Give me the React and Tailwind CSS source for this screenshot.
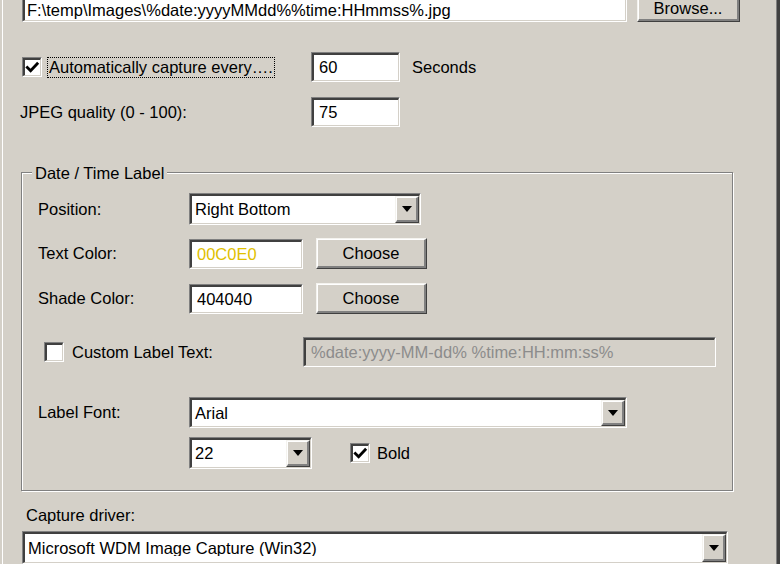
import React from "react";

function Sunken({ className = "", innerClassName = "bg-white", children }) {
  return (
    <div className={`border border-t-[#808080] border-l-[#808080] border-b-white border-r-white ${className}`}>
      <div className={`h-full w-full border-t-2 border-l-2 border-b border-r border-t-[#404040] border-l-[#404040] border-b-[#d4d0c8] border-r-[#d4d0c8] flex items-center ${innerClassName}`}>
        {children}
      </div>
    </div>
  );
}

function Raised({ className = "", children }) {
  return (
    <div className={`border border-t-[#f4f3ef] border-l-[#f4f3ef] border-r-[#404040] border-b-[#404040] bg-[#d4d0c8] ${className}`}>
      <div className="h-full w-full border-t border-l border-r-2 border-b-2 border-t-white border-l-white border-r-[#808080] border-b-[#808080] flex items-center justify-center">
        {children}
      </div>
    </div>
  );
}

function Arrow() {
  return (
    <svg width="10" height="6" viewBox="0 0 10 6">
      <path d="M0 0 H10 L5 6 Z" fill="#000" />
    </svg>
  );
}

function Combo({ className = "", text }) {
  return (
    <Sunken className={className}>
      <span className="flex-1 pl-[3px] whitespace-nowrap overflow-hidden">{text}</span>
      <Raised className="w-[24px] h-full shrink-0">
        <Arrow />
      </Raised>
    </Sunken>
  );
}

function Check({ checked }) {
  return (
    <Sunken className="w-[20px] h-[20px] shrink-0">
      {checked && (
        <svg width="16" height="16" viewBox="0 0 16 16" className="block">
          <path d="M2.5 7.5 L6 11 L13 3.5" stroke="#000" strokeWidth="3" fill="none" strokeLinecap="square" />
        </svg>
      )}
    </Sunken>
  );
}

export default function App() {
  return (
    <div
      className="w-[780px] h-[564px] bg-[#d4d0c8] pl-[2px] border-r-[3px] border-r-[#404040] overflow-hidden text-[16.5px] text-black leading-none"
      style={{ fontFamily: '"Liberation Sans", Arial, sans-serif' }}
    >
      <div className="h-full border-l border-l-white border-r border-r-[#808080] overflow-hidden flex flex-col">
        {/* Row 1: path + browse */}
        <div className="flex items-end mt-[-9px] ml-[19px]">
          <Sunken className="w-[605px] h-[30px]">
            <span className="pl-[2px] pt-[5px] whitespace-nowrap">F:\temp\Images\%date:yyyyMMdd%%time:HHmmss%.jpg</span>
          </Sunken>
          <Raised className="ml-[10px] w-[103px] h-[31px]">
            <span className="pt-[5px]">Browse...</span>
          </Raised>
        </div>

        {/* Row 2: auto capture */}
        <div className="flex items-center mt-[30px] ml-[19px] h-[30px]">
          <div className="w-[289px] flex items-center">
            <Check checked />
            <span className="ml-[5px] h-[21px] px-[1px] border border-dotted border-black flex items-center">
              Automatically capture every….
            </span>
          </div>
          <Sunken className="w-[89px] h-[30px]">
            <span className="pl-[5px]">60</span>
          </Sunken>
          <span className="ml-[12px]">Seconds</span>
        </div>

        {/* Row 3: JPEG quality */}
        <div className="flex items-center mt-[15px] ml-[17px] h-[30px]">
          <span className="w-[291px]">JPEG quality (0 - 100):</span>
          <Sunken className="w-[89px] h-[30px]">
            <span className="pl-[5px]">75</span>
          </Sunken>
        </div>

        {/* Group box */}
        <div className="relative mt-[45px] ml-[18px] w-[712px] h-[319px] border border-[#808080] shadow-[1px_1px_0_#ffffff,inset_1px_1px_0_#ffffff] pl-[16px] pt-[20px] shrink-0">
          <span className="absolute left-[10px] top-[-9px] px-[3px] bg-[#d4d0c8] leading-[18px]">Date / Time Label</span>

          <div className="flex items-center h-[32px]">
            <span className="w-[151px]">Position:</span>
            <Combo className="w-[232px] h-[32px]" text="Right Bottom" />
          </div>

          <div className="flex items-center h-[31px] mt-[13px]">
            <span className="w-[151px]">Text Color:</span>
            <Sunken className="w-[114px] h-[30px]">
              <span className="pl-[5px] text-[#e0c000]">00C0E0</span>
            </Sunken>
            <Raised className="ml-[13px] w-[111px] h-[31px]">
              <span>Choose</span>
            </Raised>
          </div>

          <div className="flex items-center h-[31px] mt-[14px]">
            <span className="w-[151px]">Shade Color:</span>
            <Sunken className="w-[114px] h-[30px]">
              <span className="pl-[5px]">404040</span>
            </Sunken>
            <Raised className="ml-[13px] w-[111px] h-[31px]">
              <span>Choose</span>
            </Raised>
          </div>

          <div className="flex items-center h-[30px] mt-[23px]">
            <div className="w-[265px] flex items-center pl-[6px]">
              <Check />
              <span className="ml-[8px]">Custom Label Text:</span>
            </div>
            <Sunken className="w-[413px] h-[30px]" innerClassName="bg-[#d4d0c8]">
              <span className="pl-[5px] text-[#8c8c8c] whitespace-nowrap">%date:yyyy-MM-dd% %time:HH:mm:ss%</span>
            </Sunken>
          </div>

          <div className="flex items-center h-[31px] mt-[30px]">
            <span className="w-[151px]">Label Font:</span>
            <Combo className="w-[438px] h-[31px]" text="Arial" />
          </div>

          <div className="flex items-center h-[32px] mt-[9px]">
            <span className="w-[151px]"></span>
            <Combo className="w-[123px] h-[32px]" text="22" />
            <div className="ml-[38px] flex items-center">
              <Check checked />
              <span className="ml-[7px]">Bold</span>
            </div>
          </div>
        </div>

        {/* Capture driver */}
        <div className="mt-[14px] ml-[23px] h-[20px] flex items-center">Capture driver:</div>
        <div className="mt-[6px] ml-[19px] shrink-0">
          <Combo className="w-[706px] h-[33px]" text="Microsoft WDM Image Capture (Win32)" />
        </div>
      </div>
    </div>
  );
}
